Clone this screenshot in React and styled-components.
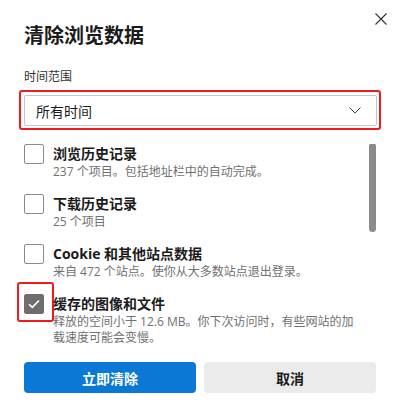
import React from 'react';
import styled, { createGlobalStyle } from 'styled-components';

const GlobalStyle = createGlobalStyle`
  html, body {
    margin: 0;
    padding: 0;
    background: #ffffff;
  }
  * {
    box-sizing: border-box;
  }
`;

const FONT = `"Open Sans", "Noto Sans CJK SC", sans-serif`;

const Dialog = styled.div`
  width: 400px;
  height: 418px;
  padding: 12px 24px 0;
  background: #ffffff;
  font-family: ${FONT};
  color: #1b1b1b;
  overflow: hidden;
`;

const Header = styled.div`
  display: flex;
  justify-content: space-between;
  align-items: flex-start;
`;

const Title = styled.h1`
  margin: 10px 0 0;
  font-size: 20px;
  line-height: 28px;
  font-weight: 700;
  color: #1b1b1b;
`;

const CloseButton = styled.button`
  width: 14px;
  height: 14px;
  margin: 0 -12px 0 0;
  padding: 0;
  border: none;
  background: none;
  display: flex;
  align-items: center;
  justify-content: center;
  cursor: pointer;
`;

const Label = styled.div`
  margin-top: 19px;
  font-size: 12px;
  line-height: 16px;
  color: #333333;
`;

const Highlight = styled.div`
  margin: 5px -5px 0 -5px;
  padding: 3px 2px 2px 3px;
  border: 2px solid #ee1c1c;
  border-radius: 3px;
`;

const Select = styled.div`
  height: 31px;
  padding: 0 15px 0 11px;
  border: 1px solid #c6c6c6;
  border-radius: 2px;
  display: flex;
  align-items: center;
  justify-content: space-between;
  font-size: 14px;
  color: #1b1b1b;
`;

const ListArea = styled.div`
  margin: 14px -10px 0;
  padding: 0 10px;
  height: 206px;
  display: flex;
  gap: 8px;
  overflow: hidden;
`;

const List = styled.div`
  flex: 1;
  display: flex;
  flex-direction: column;
  gap: 14px;
  padding-top: 0;
`;

const Track = styled.div`
  width: 7px;
  flex-shrink: 0;
`;

const Thumb = styled.div`
  width: 7px;
  height: 89px;
  margin-top: -1px;
  border-radius: 4px;
  background: #8b8b8b;
`;

const Item = styled.div`
  display: flex;
  gap: 9px;
`;

const CheckWrap = styled.div`
  position: relative;
  flex-shrink: 0;
`;

const Check = styled.div`
  width: 20px;
  height: 20px;
  border-radius: 2px;
  border: 1px solid ${p => (p.$checked ? '#6e6e6e' : '#8a8a8a')};
  background: ${p => (p.$checked ? '#6e6e6e' : '#ffffff')};
  display: flex;
  align-items: center;
  justify-content: center;
`;

const CheckMark = styled.div`
  position: absolute;
  left: -7px;
  top: -12px;
  width: 37px;
  height: 40px;
  border: 2.5px solid #ee1c1c;
  border-radius: 3px;
`;

const Text = styled.div`
  display: flex;
  flex-direction: column;
  padding-right: 4px;
`;

const ItemTitle = styled.div`
  font-size: 14px;
  line-height: 20px;
  font-weight: 700;
  color: #1b1b1b;
`;

const ItemSub = styled.div`
  font-size: 12px;
  line-height: 16px;
  color: #707070;
`;

const Buttons = styled.div`
  margin-top: 12px;
  display: grid;
  grid-template-columns: 1fr 1fr;
  gap: 8px;
`;

const Button = styled.button`
  height: 31px;
  border: none;
  border-radius: 4px;
  font-family: ${FONT};
  font-size: 14px;
  font-weight: 700;
  cursor: pointer;
  background: ${p => (p.$primary ? '#0a78d4' : '#ebebeb')};
  color: ${p => (p.$primary ? '#ffffff' : '#1b1b1b')};
`;

const items = [
  { title: '浏览历史记录', sub: '237 个项目。包括地址栏中的自动完成。' },
  { title: '下载历史记录', sub: '25 个项目' },
  { title: 'Cookie 和其他站点数据', sub: '来自 472 个站点。使你从大多数站点退出登录。' },
  {
    title: '缓存的图像和文件',
    sub: '释放的空间小于 12.6 MB。你下次访问时，有些网站的加载速度可能会变慢。',
    checked: true,
  },
];

export default function App() {
  return (
    <>
      <GlobalStyle />
      <Dialog>
        <Header>
          <Title>清除浏览数据</Title>
          <CloseButton aria-label="关闭">
            <svg width="12" height="12" viewBox="0 0 12 12">
              <path d="M0.5 0.5 L11.5 11.5 M11.5 0.5 L0.5 11.5" stroke="#333" strokeWidth="1.1" fill="none" />
            </svg>
          </CloseButton>
        </Header>
        <Label>时间范围</Label>
        <Highlight>
          <Select>
            <span>所有时间</span>
            <svg width="12" height="7" viewBox="0 0 12 7">
              <path d="M0.5 0.5 L6 6 L11.5 0.5" stroke="#444" strokeWidth="1" fill="none" />
            </svg>
          </Select>
        </Highlight>
        <ListArea>
          <List>
            {items.map(it => (
              <Item key={it.title}>
                <CheckWrap>
                  <Check $checked={it.checked}>
                    {it.checked && (
                      <svg width="12" height="10" viewBox="0 0 12 10">
                        <path d="M1 5.2 L4.3 8.4 L11 1.5" stroke="#fff" strokeWidth="1.6" fill="none" />
                      </svg>
                    )}
                  </Check>
                  {it.checked && <CheckMark />}
                </CheckWrap>
                <Text>
                  <ItemTitle>{it.title}</ItemTitle>
                  <ItemSub>{it.sub}</ItemSub>
                </Text>
              </Item>
            ))}
          </List>
          <Track>
            <Thumb />
          </Track>
        </ListArea>
        <Buttons>
          <Button $primary>立即清除</Button>
          <Button>取消</Button>
        </Buttons>
      </Dialog>
    </>
  );
}
